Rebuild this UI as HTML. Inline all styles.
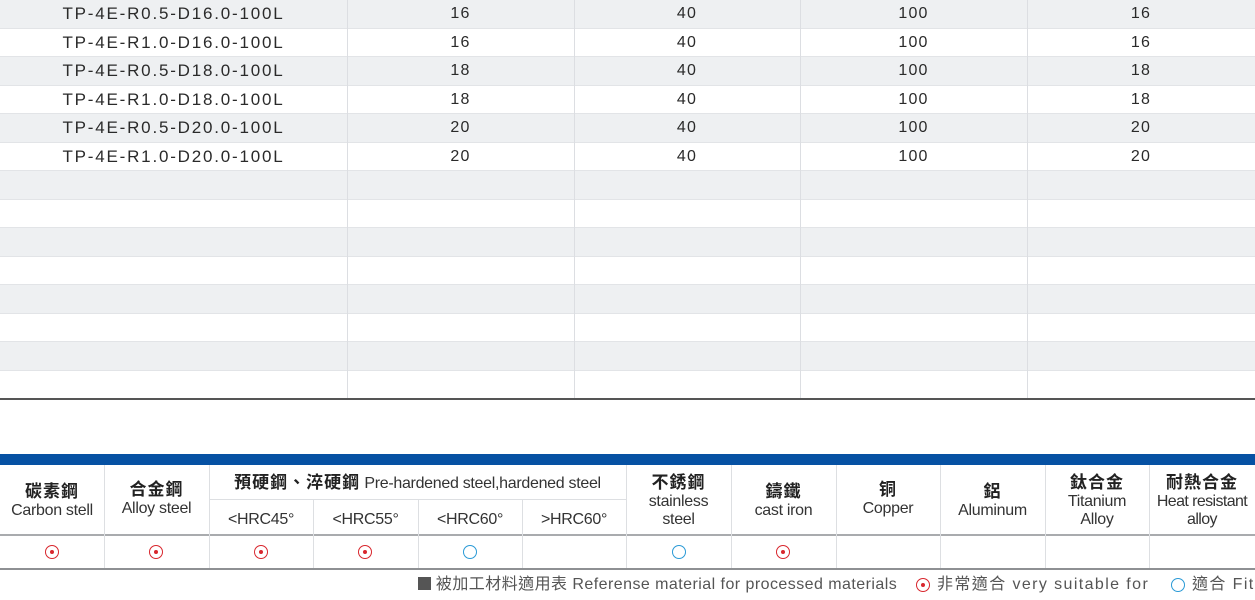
<!DOCTYPE html>
<html><head><meta charset="utf-8"><style>
*{margin:0;padding:0;box-sizing:border-box}
body{width:1255px;height:600px;background:#fff;position:relative;overflow:hidden;font-family:"Liberation Sans","Noto Sans CJK TC",sans-serif;color:#333}
.r{position:absolute;left:0;width:1255px;height:28.5px;border-bottom:1px solid #e2e4e7}
.g{background:#eef0f2}
.c{position:absolute;top:0;height:100%;text-align:center;line-height:28px;font-size:16px;letter-spacing:1.2px;color:#2a2a2a}
.c.n{font-size:17px;letter-spacing:1.8px}
.vl{position:absolute;top:0;width:1px;height:399px;background:#dcdee2}
.h{position:absolute;text-align:center;font-size:16px;color:#333;line-height:18px;letter-spacing:-0.3px}
.h b{font-size:17px;letter-spacing:1px;color:#222}
.bv{position:absolute;width:1px;background:#dddfe2}
.dot{position:absolute;width:14px;height:14px;border:1.6px solid #d8262d;border-radius:50%}
.dot:after{content:"";position:absolute;left:3.5px;top:3.5px;width:4px;height:4px;border-radius:50%;background:#d8262d}
.o{position:absolute;width:14px;height:14px;border:1.6px solid #2a9ad6;border-radius:50%}
.lg{position:absolute;top:576px;font-size:16px;color:#555;white-space:nowrap;line-height:18px}
</style></head><body>
<div class="r g" style="top:0"><div class="c n" style="left:0;width:347px">TP-4E-R0.5-D16.0-100L</div><div class="c" style="left:347px;width:227px">16</div><div class="c" style="left:574px;width:226px">40</div><div class="c" style="left:800px;width:227px">100</div><div class="c" style="left:1027px;width:228px">16</div></div>
<div class="r" style="top:28.5px"><div class="c n" style="left:0;width:347px">TP-4E-R1.0-D16.0-100L</div><div class="c" style="left:347px;width:227px">16</div><div class="c" style="left:574px;width:226px">40</div><div class="c" style="left:800px;width:227px">100</div><div class="c" style="left:1027px;width:228px">16</div></div>
<div class="r g" style="top:57px"><div class="c n" style="left:0;width:347px">TP-4E-R0.5-D18.0-100L</div><div class="c" style="left:347px;width:227px">18</div><div class="c" style="left:574px;width:226px">40</div><div class="c" style="left:800px;width:227px">100</div><div class="c" style="left:1027px;width:228px">18</div></div>
<div class="r" style="top:85.5px"><div class="c n" style="left:0;width:347px">TP-4E-R1.0-D18.0-100L</div><div class="c" style="left:347px;width:227px">18</div><div class="c" style="left:574px;width:226px">40</div><div class="c" style="left:800px;width:227px">100</div><div class="c" style="left:1027px;width:228px">18</div></div>
<div class="r g" style="top:114px"><div class="c n" style="left:0;width:347px">TP-4E-R0.5-D20.0-100L</div><div class="c" style="left:347px;width:227px">20</div><div class="c" style="left:574px;width:226px">40</div><div class="c" style="left:800px;width:227px">100</div><div class="c" style="left:1027px;width:228px">20</div></div>
<div class="r" style="top:142.5px"><div class="c n" style="left:0;width:347px">TP-4E-R1.0-D20.0-100L</div><div class="c" style="left:347px;width:227px">20</div><div class="c" style="left:574px;width:226px">40</div><div class="c" style="left:800px;width:227px">100</div><div class="c" style="left:1027px;width:228px">20</div></div>
<div class="r g" style="top:171px"></div>
<div class="r" style="top:199.5px"></div>
<div class="r g" style="top:228px"></div>
<div class="r" style="top:256.5px"></div>
<div class="r g" style="top:285px"></div>
<div class="r" style="top:313.5px"></div>
<div class="r g" style="top:342px"></div>
<div class="r" style="top:370.5px;border:none"></div>
<div class="vl" style="left:347px"></div><div class="vl" style="left:574px"></div><div class="vl" style="left:800px"></div><div class="vl" style="left:1027px"></div>
<div style="position:absolute;left:0;top:398px;width:1255px;height:2px;background:#555"></div>

<div style="position:absolute;left:0;top:454px;width:1255px;height:11px;background:#0651a3"></div>
<div style="position:absolute;left:0;top:534px;width:1255px;height:2px;background:#a9abae"></div>
<div style="position:absolute;left:0;top:568px;width:1255px;height:2px;background:#8e9093"></div>
<div style="position:absolute;left:209px;top:499px;width:417px;height:1px;background:#dddfe2"></div>
<div class="bv" style="left:104px;top:465px;height:103px"></div>
<div class="bv" style="left:209px;top:465px;height:103px"></div>
<div class="bv" style="left:313px;top:500px;height:68px"></div>
<div class="bv" style="left:418px;top:500px;height:68px"></div>
<div class="bv" style="left:522px;top:500px;height:68px"></div>
<div class="bv" style="left:626px;top:465px;height:103px"></div>
<div class="bv" style="left:731px;top:465px;height:103px"></div>
<div class="bv" style="left:836px;top:465px;height:103px"></div>
<div class="bv" style="left:940px;top:465px;height:103px"></div>
<div class="bv" style="left:1045px;top:465px;height:103px"></div>
<div class="bv" style="left:1149px;top:465px;height:103px"></div>

<div class="h" style="left:0;width:104px;top:483px"><b>碳素鋼</b><br>Carbon stell</div>
<div class="h" style="left:104px;width:105px;top:481px"><b>合金鋼</b><br>Alloy steel</div>
<div class="h" style="left:209px;width:417px;top:474px"><b>預硬鋼、淬硬鋼</b> Pre-hardened steel,hardened steel</div>
<div class="h" style="left:209px;width:104px;top:511px">&lt;HRC45°</div>
<div class="h" style="left:313px;width:105px;top:511px">&lt;HRC55°</div>
<div class="h" style="left:418px;width:104px;top:511px">&lt;HRC60°</div>
<div class="h" style="left:522px;width:104px;top:511px">&gt;HRC60°</div>
<div class="h" style="left:626px;width:105px;top:474px"><b>不銹鋼</b><br>stainless<br>steel</div>
<div class="h" style="left:731px;width:105px;top:483px"><b>鑄鐵</b><br>cast iron</div>
<div class="h" style="left:836px;width:104px;top:481px"><b>铜</b><br>Copper</div>
<div class="h" style="left:940px;width:105px;top:483px"><b>鋁</b><br>Aluminum</div>
<div class="h" style="left:1045px;width:104px;top:474px"><b>鈦合金</b><br>Titanium<br>Alloy</div>
<div class="h" style="left:1149px;width:106px;top:474px;letter-spacing:-0.6px"><b>耐熱合金</b><br>Heat resistant<br>alloy</div>

<div class="dot" style="left:45px;top:545px"></div>
<div class="dot" style="left:149px;top:545px"></div>
<div class="dot" style="left:254px;top:545px"></div>
<div class="dot" style="left:358px;top:545px"></div>
<div class="o" style="left:463px;top:545px"></div>
<div class="o" style="left:672px;top:545px"></div>
<div class="dot" style="left:776px;top:545px"></div>

<div class="lg" style="left:418px;letter-spacing:0.45px"><span style="display:inline-block;width:13px;height:13px;background:#555;vertical-align:-1px"></span>&nbsp;被加工材料適用表 Referense material for processed materials</div>
<div class="dot" style="left:916px;top:578px"></div>
<div class="lg" style="left:937px;letter-spacing:1.4px">非常適合 very suitable for</div>
<div class="o" style="left:1171px;top:578px"></div>
<div class="lg" style="left:1192px;letter-spacing:1.4px">適合 Fit</div>
</body></html>
